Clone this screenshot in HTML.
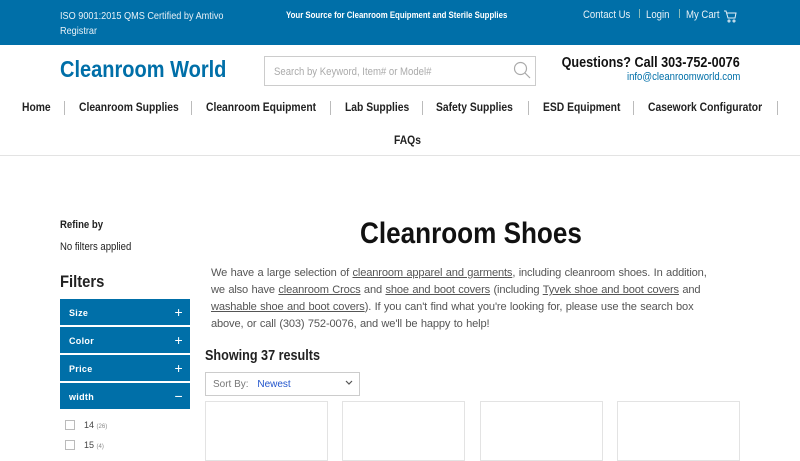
<!DOCTYPE html>
<html><head><meta charset="utf-8"><style>
*{margin:0;padding:0;box-sizing:border-box}
body{width:800px;height:450px;overflow:hidden;background:#fff;font-family:"Liberation Sans",sans-serif;color:#222;position:relative}
.a{position:absolute;white-space:nowrap}
.c{transform:scaleX(.87);transform-origin:left top}
.cr{transform:scaleX(.87);transform-origin:right top}
.top{position:absolute;left:0;top:0;width:800px;height:45px;background:#006fa8;color:#e8f1f7}
.nav{font-size:12px;font-weight:bold;color:#222;top:100px;transform:scaleX(.86);transform-origin:left top}
.sep{position:absolute;width:1px;height:14px;background:#bbb;top:101px}
.fb{position:absolute;left:60px;width:130px;height:26px;background:#006fa8;color:#fff;font-size:9px;font-weight:bold;padding:9px 9px;letter-spacing:.3px}
.fb span{position:absolute;right:7px;top:5px;font-size:14px;font-weight:normal}
.cb{position:absolute;left:65px;width:10px;height:10px;border:1px solid #bbb}
.card{position:absolute;top:401px;width:123px;height:60px;border:1px solid #e3e3e3}
u{color:#555}
.p{font-size:11.5px;line-height:17px;color:#555;letter-spacing:-.15px;word-spacing:.5px}
</style></head><body>
<div class="top">
<div class="a c" style="left:60px;top:9px;font-size:10.5px;line-height:15px;white-space:normal;width:210px">ISO 9001:2015 QMS Certified by Amtivo Registrar</div>
<div class="a c" style="left:286px;top:10px;font-size:9px;font-weight:bold;color:#fff">Your Source for Cleanroom Equipment and Sterile Supplies</div>
<div class="a c" style="left:583px;top:9px;font-size:11px">Contact Us</div>
<div class="sep" style="left:639px;top:9px;height:9px;background:#8bb"></div>
<div class="a c" style="left:646px;top:9px;font-size:11px">Login</div>
<div class="sep" style="left:679px;top:9px;height:9px;background:#8bb"></div>
<div class="a c" style="left:686px;top:9px;font-size:11px">My Cart</div>
<svg class="a" style="left:723px;top:9px" width="14" height="14" viewBox="0 0 14 14" fill="none" stroke="#e8f1f7" stroke-width="1"><path d="M1 2h2l2 7h7l1-5H4"/><circle cx="6" cy="12" r="1"/><circle cx="11" cy="12" r="1"/></svg>
</div>
<div class="a c" style="left:60px;top:56px;font-size:23px;font-weight:bold;color:#006fa8">Cleanroom World</div>
<div class="a" style="left:264px;top:56px;width:272px;height:30px;border:1px solid #ccc"></div>
<div class="a c" style="left:274px;top:66px;font-size:11px;color:#aaa">Search by Keyword, Item# or Model#</div>
<svg class="a" style="left:513px;top:61px" width="18" height="18" viewBox="0 0 18 18" fill="none" stroke="#aaa" stroke-width="1.2"><circle cx="7.5" cy="7.5" r="6"/><path d="M12 12l5 5"/></svg>
<div class="a cr" style="right:60px;top:55px;font-size:14.5px;font-weight:bold;color:#111">Questions? Call 303-752-0076</div>
<div class="a cr" style="right:60px;top:71px;font-size:11px;color:#006fa8">info@cleanroomworld.com</div>
<div class="a nav" style="left:22px">Home</div>
<div class="sep" style="left:64px"></div>
<div class="a nav" style="left:79px">Cleanroom Supplies</div>
<div class="sep" style="left:191px"></div>
<div class="a nav" style="left:206px">Cleanroom Equipment</div>
<div class="sep" style="left:330px"></div>
<div class="a nav" style="left:345px">Lab Supplies</div>
<div class="sep" style="left:422px"></div>
<div class="a nav" style="left:436px">Safety Supplies</div>
<div class="sep" style="left:528px"></div>
<div class="a nav" style="left:543px">ESD Equipment</div>
<div class="sep" style="left:633px"></div>
<div class="a nav" style="left:648px">Casework Configurator</div>
<div class="sep" style="left:777px"></div>
<div class="a nav" style="left:394px;top:133px">FAQs</div>
<div class="a" style="left:0;top:155px;width:800px;height:1px;background:#e3e3e3"></div>
<div class="a c" style="left:60px;top:219px;font-size:11px;font-weight:bold">Refine by</div>
<div class="a c" style="left:60px;top:241px;font-size:11px">No filters applied</div>
<div class="a c" style="left:60px;top:272px;font-size:17px;font-weight:bold">Filters</div>
<div class="fb" style="top:299px">Size<span>+</span></div>
<div class="fb" style="top:327px">Color<span>+</span></div>
<div class="fb" style="top:355px">Price<span>+</span></div>
<div class="fb" style="top:383px">width<span>−</span></div>
<div class="cb" style="top:420px"></div><div class="a" style="left:84px;top:420px;font-size:9px;color:#444">14 <small style="font-size:6px;color:#888">(26)</small></div>
<div class="cb" style="top:440px"></div><div class="a" style="left:84px;top:440px;font-size:9px;color:#444">15 <small style="font-size:6px;color:#888">(4)</small></div>
<div class="a c" style="left:360px;top:217px;font-size:30px;font-weight:bold;color:#111">Cleanroom Shoes</div>
<div class="a p" style="left:211px;top:265px;font-size:11.1px">We have a large selection of <u>cleanroom apparel and garments</u>, including cleanroom shoes. In addition,</div>
<div class="a p" style="left:211px;top:282px;font-size:11.1px">we also have <u>cleanroom Crocs</u> and <u>shoe and boot covers</u> (including <u>Tyvek shoe and boot covers</u> and</div>
<div class="a p" style="left:211px;top:299px;font-size:11.1px"><u>washable shoe and boot covers</u>). If you can't find what you're looking for, please use the search box</div>
<div class="a p" style="left:211px;top:316px;font-size:11.1px">above, or call (303) 752-0076, and we'll be happy to help!</div>
<div class="a c" style="left:205px;top:348px;font-size:14.5px;font-weight:bold;color:#222">Showing 37 results</div>
<div class="a" style="left:205px;top:372px;width:155px;height:24px;border:1px solid #ccc"></div>
<div class="a" style="left:213px;top:379px;font-size:10px;color:#777">Sort By: <span style="color:#2255cc;margin-left:6px">Newest</span></div>
<svg class="a" style="left:345px;top:380px" width="8" height="6" viewBox="0 0 8 6" fill="none" stroke="#555" stroke-width="1.2"><path d="M1 1l3 3 3-3"/></svg>
<div class="card" style="left:205px"></div>
<div class="card" style="left:342px"></div>
<div class="card" style="left:480px"></div>
<div class="card" style="left:617px"></div>
</body></html>
